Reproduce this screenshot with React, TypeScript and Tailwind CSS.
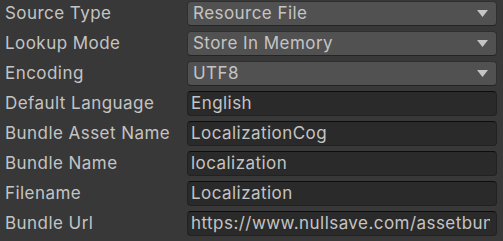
import React from "react";

const rows: { label: string; value: string; kind: "drop" | "text" }[] = [
  { label: "Source Type", value: "Resource File", kind: "drop" },
  { label: "Lookup Mode", value: "Store In Memory", kind: "drop" },
  { label: "Encoding", value: "UTF8", kind: "drop" },
  { label: "Default Language", value: "English", kind: "text" },
  { label: "Bundle Asset Name", value: "LocalizationCog", kind: "text" },
  { label: "Bundle Name", value: "localization", kind: "text" },
  { label: "Filename", value: "Localization", kind: "text" },
  { label: "Bundle Url", value: "https://www.nullsave.com/assetbundles", kind: "text" },
];

export default function App() {
  return (
    <div
      className="w-[503px] h-[241px] bg-[#383838] overflow-hidden pt-[1px] flex flex-col gap-[5px] text-[#c4c4c4] text-[17px]"
      style={{ fontFamily: "Inter, 'Noto Sans', sans-serif" }}
    >
      {rows.map((r) => (
        <div key={r.label} className="flex items-center h-[25px] shrink-0">
          <div className="w-[187px] pl-[5px] whitespace-nowrap tracking-[0.45px]">{r.label}</div>
          {r.kind === "drop" ? (
            <div className="w-[310px] h-[25px] rounded-[4px] bg-[#515151] border border-[#2f2f2f] border-b-[#242424] flex items-center pl-[5px] pr-[8px]">
              <span className="flex-1 whitespace-nowrap tracking-[0.45px]">{r.value}</span>
              <svg width="11" height="7" viewBox="0 0 11 7">
                <polygon points="0,0 11,0 5.5,7" fill="#c4c4c4" />
              </svg>
            </div>
          ) : (
            <div className="w-[310px] h-[25px] rounded-[4px] bg-[#2a2a2a] border border-[#212121] border-t-[#0d0d0d] flex items-center pl-[3px] pr-[6px]">
              <div className="overflow-hidden flex-1">
                <span className="whitespace-nowrap tracking-[0.45px]">{r.value}</span>
              </div>
            </div>
          )}
        </div>
      ))}
    </div>
  );
}
